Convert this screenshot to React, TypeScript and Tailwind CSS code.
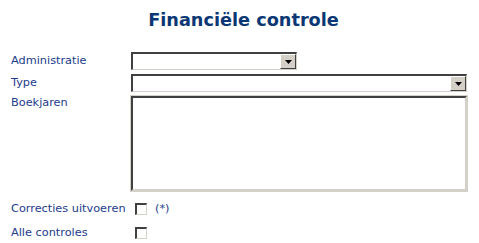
import React from 'react';

// Classic inset select box with a grey dropdown button
function Dropdown({ width }: { width: string }) {
  return (
    <div
      className={`${width} h-[18px] flex border-t-2 border-l-2 border-t-[#404040] border-l-[#404040] border-b border-r border-b-[#d4d0c8] border-r-[#d4d0c8] bg-white`}
    >
      <div className="flex-1" />
      <div className="w-[16px] h-[15px] bg-[#d4d0c8] border border-t-white border-l-white border-b-[#404040] border-r-[#404040] flex items-center justify-center">
        <svg width="7" height="4" viewBox="0 0 7 4">
          <path d="M0 0h7L3.5 4z" fill="#000" />
        </svg>
      </div>
    </div>
  );
}

function Checkbox() {
  return (
    <div className="w-[12px] h-[12px] bg-white border-t-2 border-l-2 border-t-[#404040] border-l-[#404040] border-b border-r border-b-[#d4d0c8] border-r-[#d4d0c8]" />
  );
}

export default function App() {
  return (
    <div className="w-[479px] h-[243px] bg-white font-['DejaVu_Sans',Verdana,sans-serif] text-[11.3px] text-[#1c3c8c] overflow-hidden">
      <h1 className="pt-[9px] pl-[8px] text-center text-[17.7px] leading-[22px] font-bold text-[#0b3875]">
        Financiële controle
      </h1>

      <div className="mt-[21px] flex flex-col">
        <div className="flex items-center h-[18px]">
          <div className="w-[131px] pl-[11px]">Administratie</div>
          <Dropdown width="w-[166px]" />
        </div>

        <div className="mt-[4px] flex items-center h-[18px]">
          <div className="w-[131px] pl-[11px]">Type</div>
          <Dropdown width="w-[336px]" />
        </div>

        <div className="mt-[4px] flex items-start">
          <div className="w-[131px] pl-[11px] leading-[14px]">Boekjaren</div>
          <div className="w-[336px] h-[95px] bg-white border-t-2 border-l-2 border-t-[#404040] border-l-[#404040] border-b-2 border-r-2 border-b-[#d4d0c8] border-r-[#d4d0c8] outline outline-1 outline-[#d4d0c8]" />
        </div>

        <div className="mt-[11px] flex items-center h-[14px]">
          <div className="pl-[11px] w-[135px] whitespace-nowrap">Correcties uitvoeren</div>
          <Checkbox />
          <span className="ml-[8px]">(*)</span>
        </div>

        <div className="mt-[10px] flex items-center h-[14px]">
          <div className="pl-[11px] w-[135px]">Alle controles</div>
          <Checkbox />
        </div>
      </div>
    </div>
  );
}
